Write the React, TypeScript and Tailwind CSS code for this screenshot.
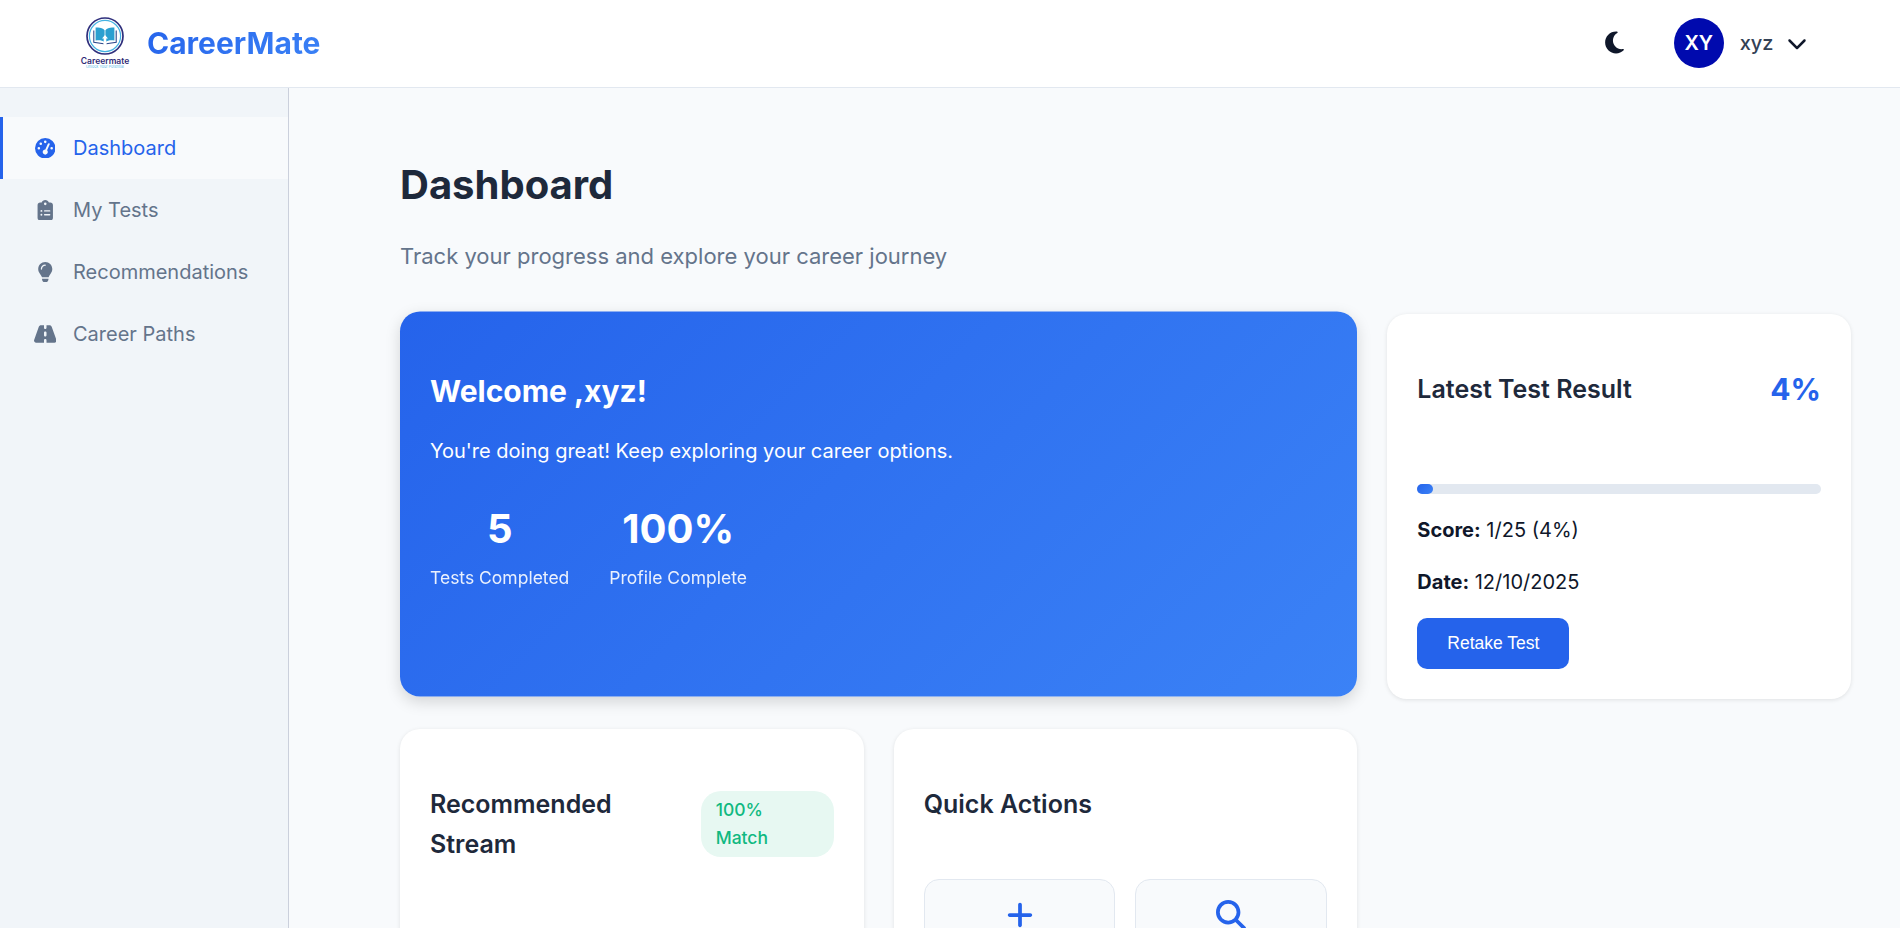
import type { ReactNode } from "react";
import {
  FaChevronDown,
  FaClipboardList,
  FaGaugeHigh,
  FaLightbulb,
  FaMagnifyingGlass,
  FaMoon,
  FaPlus,
  FaRoad,
} from "react-icons/fa6";

function Logo() {
  return (
    <svg viewBox="0 0 50 56" className="h-[56px] w-[50px] overflow-visible" aria-hidden="true">
      <circle cx="25" cy="21" r="18" fill="#fff" stroke="#2f2f7c" strokeWidth="1.7" />
      <circle cx="25" cy="21" r="15.6" fill="none" stroke="#45b3e3" strokeWidth="1.2" />
      <path
        d="M13.800 15.500v11.800l9.800 1.400M36.200 15.500v11.800l-9.800 1.400"
        fill="none"
        stroke="#2f4a8c"
        strokeWidth="1.1"
      />
      <path d="M15.600 12.600c3.800-.6 7.200.3 9 2.600v12c-2.200-1.900-5.200-2.300-9-1.700z" fill="#2b9fd0" />
      <path d="M34.400 12.600c-3.800-.6-7.200.3-9 2.600v12c2.200-1.900 5.200-2.300 9-1.700z" fill="#2b9fd0" />
      <path d="M25 20l3 3.500h-1.700v5.500h-2.600v-5.500H22z" fill="#fff" />
      <text
        x="25"
        y="48.500"
        textAnchor="middle"
        textLength="48.500"
        lengthAdjust="spacingAndGlyphs"
        className="fill-[#2f2a75] font-[Inter] text-[8.500px] font-semibold"
      >
        Careermate
      </text>
      <text
        x="25"
        y="53"
        textAnchor="middle"
        textLength="38"
        lengthAdjust="spacingAndGlyphs"
        className="fill-[#5fbde8] font-[Inter] text-[4px]"
      >
        Unlock Your Potential
      </text>
    </svg>
  );
}

function NavItem({ icon, label, active = false }: { icon: ReactNode; label: string; active?: boolean }) {
  return (
    <a
      className={
        active
          ? "flex h-[62px] items-center border-l-[3px] border-[#2563eb] bg-[#f8fafc] pl-[29.5px] text-[#2563eb]"
          : "flex h-[62px] items-center border-l-[3px] border-transparent pl-[29.5px] text-[#64748b]"
      }
    >
      <span className="flex w-[25px] justify-center text-[20.5px]">{icon}</span>
      <span className="ml-[15.5px]">{label}</span>
    </a>
  );
}

function Card({ children }: { children: ReactNode }) {
  return (
    <section className="rounded-[20px] bg-white p-[30px] shadow-[0_1px_4px_rgba(0,0,0,0.1)]">{children}</section>
  );
}

function Stat({ value, label }: { value: string; label: string }) {
  return (
    <div className="text-center">
      <div className="text-[40px] leading-[64px] font-bold">{value}</div>
      <div className="mt-[3px] text-[17.5px] leading-7 opacity-90">{label}</div>
    </div>
  );
}

function Action({ icon, label }: { icon: ReactNode; label: string }) {
  return (
    <button
      aria-label={label}
      className="flex h-[130px] flex-col items-center rounded-[15px] border border-[#e2e8f0] bg-[#f8fafc] pt-5 text-[30px] text-[#2563eb]"
    >
      {icon}
    </button>
  );
}

export default function App() {
  return (
    <div className="flex h-[928px] flex-col overflow-hidden bg-[#f8fafc] font-[Inter,sans-serif] text-[20px] leading-8 text-[#0f172a]">
      <header className="flex h-[88px] shrink-0 items-center justify-between border-b border-[#e2e8f0] bg-white pr-[93px] pb-0.5 pl-20">
        <div className="flex items-center gap-[17px]">
          <Logo />
          <span className="bg-linear-135/srgb from-[#2563eb] to-[#3b82f6] bg-clip-text text-[30px] leading-[48px] font-bold text-transparent">
            CareerMate
          </span>
        </div>
        <div className="flex items-center">
          <FaMoon className="mr-[47px] size-[25px]" />
          <div className="flex size-[50px] items-center justify-center rounded-full bg-[#000aae] text-[20px] font-semibold tracking-[-0.2px] text-white">
            XY
          </div>
          <span className="ml-4 font-medium text-[#334155]">xyz</span>
          <FaChevronDown className="ml-[13.500px] size-5" />
        </div>
      </header>

      <div className="flex min-h-0 flex-1">
        <nav className="w-[289px] shrink-0 border-r border-[#cbd0dc] bg-[#f1f5f9] pt-[29px]">
          <NavItem icon={<FaGaugeHigh />} label="Dashboard" active />
          <NavItem icon={<FaClipboardList />} label="My Tests" />
          <NavItem icon={<FaLightbulb />} label="Recommendations" />
          <NavItem icon={<FaRoad className="h-5 w-[22.5px]" />} label="Career Paths" />
        </nav>

        <main className="flex-1 pt-[65px] pr-[49px] pl-[111px]">
          <h1 className="text-[40px] leading-[64px] font-bold text-[#1e293b]">Dashboard</h1>
          <p className="mt-[22px] text-[22px] leading-[35px] text-[#64748b]">
            Track your progress and explore your career journey
          </p>

          <div className="mt-[40.4px] grid grid-cols-3 gap-[30px]">
            <section className="col-span-2 h-[385px] -translate-y-[2.5px] rounded-[20px] bg-linear-135/srgb from-[#2563eb] to-[#3b82f6] px-[30px] pt-[55px] text-white shadow-[0_5px_15px_rgba(0,0,0,0.15)]">
              <h2 className="text-[30px] leading-[48px] font-bold">Welcome ,xyz!</h2>
              <p className="mt-5">You're doing great! Keep exploring your career options.</p>
              <div className="mt-[30px] flex gap-10">
                <Stat value="5" label="Tests Completed" />
                <Stat value="100%" label="Profile Complete" />
              </div>
            </section>

            <Card>
              <div className="flex h-[90px] items-center justify-between">
                <h3 className="text-[25px] leading-10 font-semibold text-[#1e293b]">Latest Test Result</h3>
                <span className="text-[30px] leading-[48px] font-bold text-[#2563eb]">4%</span>
              </div>
              <div className="mt-[50px] h-2.5 rounded-[5px] bg-[#e2e8f0]">
                <div className="h-full w-[4%] rounded-[5px] bg-linear-135/srgb from-[#2563eb] to-[#3b82f6]" />
              </div>
              <p className="mt-5">
                <strong className="font-bold">Score:</strong> 1/25 (4%)
              </p>
              <p className="mt-5">
                <strong className="font-bold">Date:</strong> 12/10/2025
              </p>
              <button className="mt-5 flex h-[51px] w-[152px] items-center justify-center rounded-[10px] bg-[#2563eb] pb-0.5 font-['Liberation_Sans',sans-serif] text-[17.5px] text-white">
                Retake Test
              </button>
            </Card>

            <Card>
              <div className="flex h-[130px] items-center justify-between">
                <h3 className="w-[200px] text-[25px] leading-10 font-semibold text-[#1e293b]">Recommended Stream</h3>
                <span className="w-[133px] rounded-[20px] bg-[#e7f8f2] px-[15px] py-[5px] text-[17.5px] leading-7 font-medium text-[#10b981]">
                  100%
                  <br />
                  Match
                </span>
              </div>
            </Card>

            <Card>
              <h3 className="pt-[25px] text-[25px] leading-10 font-semibold text-[#1e293b]">Quick Actions</h3>
              <div className="mt-[55px] grid grid-cols-2 gap-5">
                <Action icon={<FaPlus />} label="Take New Test" />
                <Action icon={<FaMagnifyingGlass />} label="Explore Careers" />
              </div>
            </Card>
          </div>
        </main>
      </div>
    </div>
  );
}
